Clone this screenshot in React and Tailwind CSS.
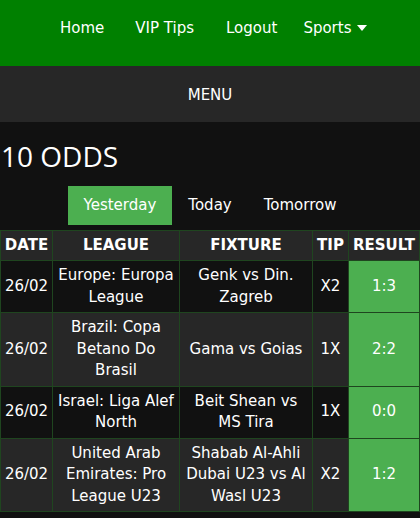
const rows = [
  { date: '26/02', league: 'Europe: Europa League', fixture: 'Genk vs Din. Zagreb', tip: 'X2', result: '1:3' },
  { date: '26/02', league: 'Brazil: Copa Betano Do Brasil', fixture: 'Gama vs Goias', tip: '1X', result: '2:2' },
  { date: '26/02', league: 'Israel: Liga Alef North', fixture: 'Beit Shean vs MS Tira', tip: '1X', result: '0:0' },
  { date: '26/02', league: 'United Arab Emirates: Pro League U23', fixture: 'Shabab Al-Ahli Dubai U23 vs Al Wasl U23', tip: 'X2', result: '1:2' },
];

function Caret() {
  return (
    <svg width="10" height="7" viewBox="0 0 10 7" className="ml-1.5 inline-block">
      <path d="M0 0 H10 L5 6 Z" fill="white" />
    </svg>
  );
}

export default function App() {
  return (
    <div className="min-h-[518px] bg-[#111111] text-white font-['DejaVu_Sans',sans-serif] text-[15px]">
      {/* top nav */}
      <nav className="h-[66px] bg-[#008000] flex pt-[16px] pl-[45px]">
        <div className="flex items-start text-[15px] leading-[24px]">
          <a className="px-[15px]">Home</a>
          <a className="px-[15px] ml-[1px]">VIP Tips</a>
          <a className="px-[15px] ml-[2px]">Logout</a>
          <a className="px-[11px] flex items-center">
            Sports <Caret />
          </a>
        </div>
      </nav>

      <div className="h-[56px] bg-[#272727] flex items-center justify-center text-[15px] pt-[2px]">
        MENU
      </div>

      <h1 className="font-['Open_Sans',sans-serif] text-[28px] leading-[34px] mt-[17px] pl-[1px]">10 ODDS</h1>

      <div className="flex justify-center mt-[13px] mb-[5px]">
        <button className="bg-[#4caf50] h-[39px] px-[16px] text-[15px]">Yesterday</button>
        <button className="h-[39px] px-[16px] text-[15px]">Today</button>
        <button className="h-[39px] px-[16px] text-[15px]">Tomorrow</button>
      </div>

      <table className="w-[419px] border-collapse table-fixed text-center leading-[21.5px]">
        <colgroup>
          <col className="w-[52px]" />
          <col className="w-[127px]" />
          <col className="w-[133px]" />
          <col className="w-[36px]" />
          <col className="w-[71px]" />
        </colgroup>
        <thead>
          <tr className="bg-[#272727]">
            {['DATE', 'LEAGUE', 'FIXTURE', 'TIP', 'RESULT'].map(h => (
              <th key={h} className="border border-[#1f451f] font-bold px-0 py-[4px] leading-[21px] whitespace-nowrap">{h}</th>
            ))}
          </tr>
        </thead>
        <tbody>
          {rows.map((r, i) => (
            <tr key={i} className={i % 2 === 0 ? 'bg-[#111111]' : 'bg-[#272727]'}>
              <td className="border border-[#1f451f] py-[4px] px-0">{r.date}</td>
              <td className="border border-[#1f451f] py-[4px] px-[2px]">{r.league}</td>
              <td className="border border-[#1f451f] py-[4px] px-[2px]">{r.fixture}</td>
              <td className="border border-[#1f451f] py-[4px] px-0">{r.tip}</td>
              <td className="border border-[#1f451f] py-[4px] bg-[#4caf50]">{r.result}</td>
            </tr>
          ))}
        </tbody>
      </table>
    </div>
  );
}
